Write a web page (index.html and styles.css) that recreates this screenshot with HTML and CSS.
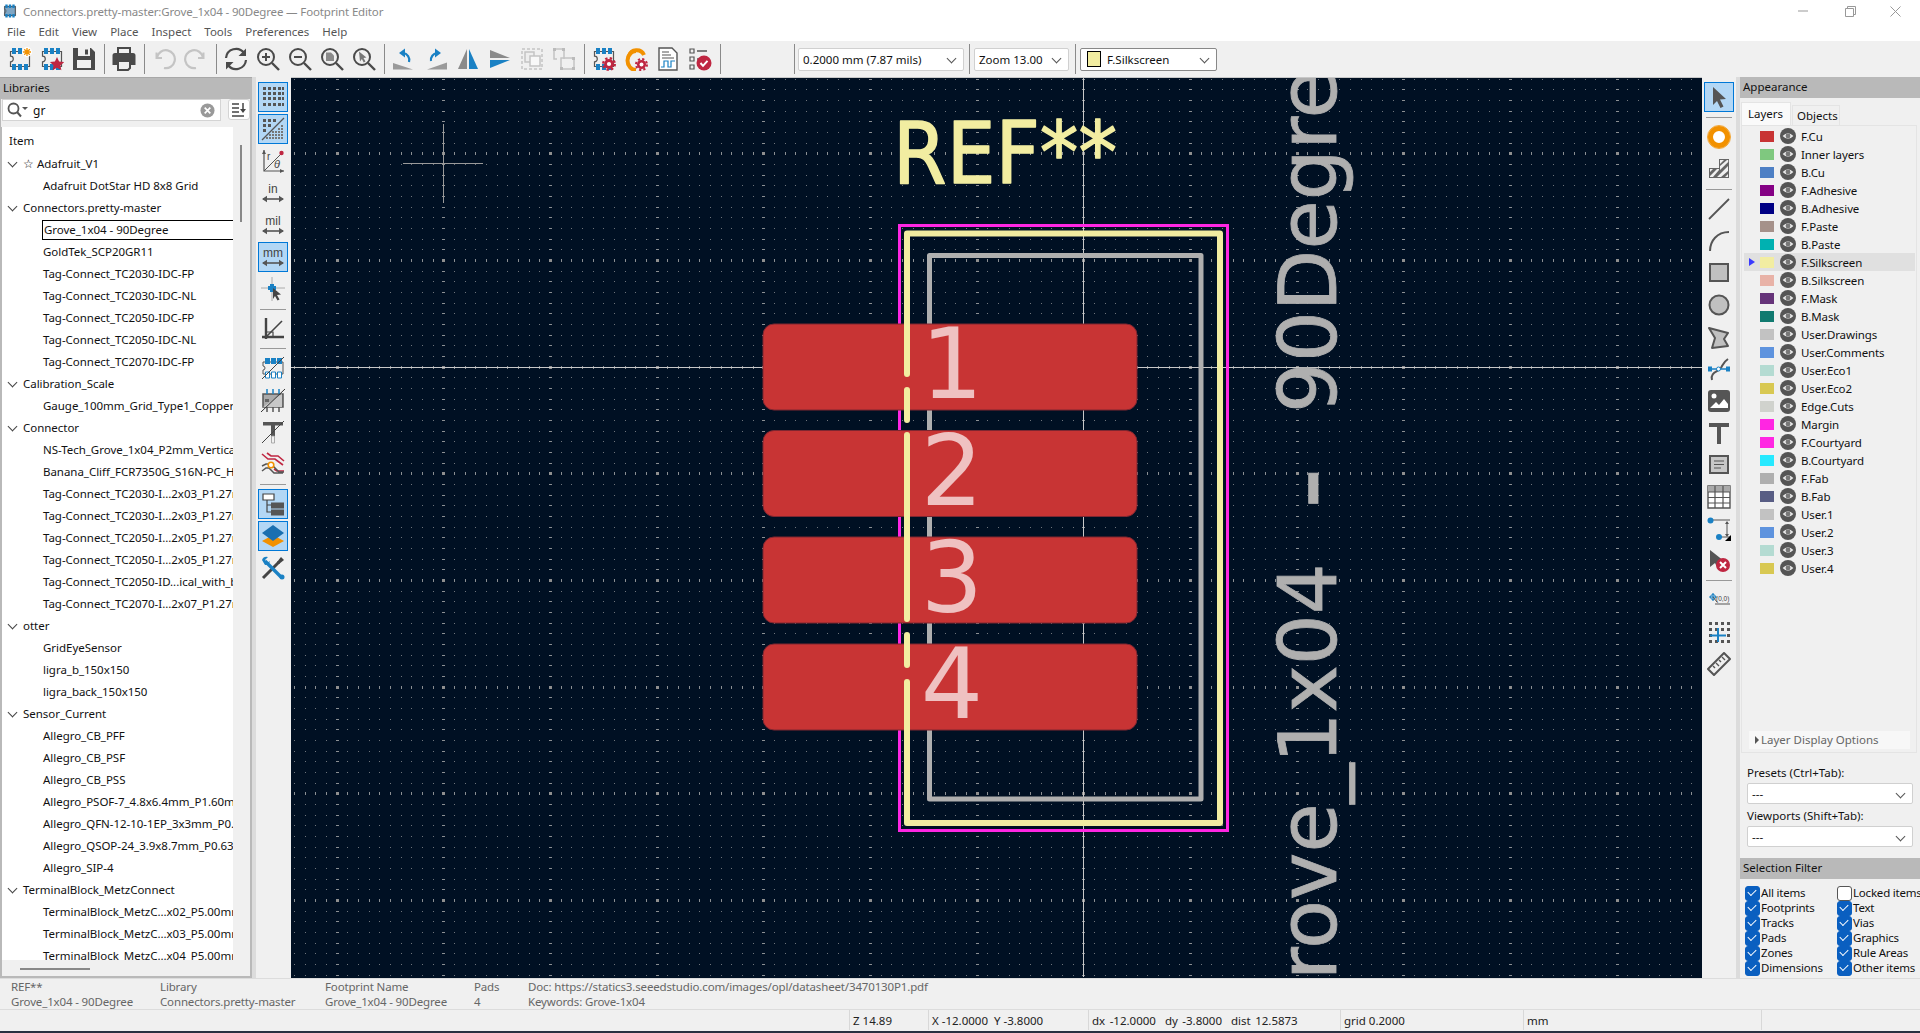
FILE: index.html
```html
<!DOCTYPE html>
<html lang="en">
<head>
<meta charset="utf-8">
<title>Footprint Editor</title>
<link rel="stylesheet" href="styles.css">
</head>
<body>
<svg class="sprite" width="0" height="0">
  <defs>
    <symbol id="chip" viewBox="0 0 24 24">
      <path d="M2.5 4.5h19v15h-19v-4.7a2.8 2.8 0 0 0 0-5.6z" fill="none" stroke="#555" stroke-width="1.2"/>
      <path d="M4 1h4v6H4zM10 1h4v6h-4zM16 1h4v6h-4zM4 17h4v6H4zM10 17h4v6h-4zM16 17h4v6h-4z" fill="#1a81c4"/>
    </symbol>
    <symbol id="gear" viewBox="0 0 12 12">
      <circle cx="6" cy="6" r="4.2" fill="#bf2641"/>
      <circle cx="6" cy="6" r="5" fill="none" stroke="#bf2641" stroke-width="2" stroke-dasharray="2 1.93"/>
      <circle cx="6" cy="6" r="1.8" fill="#fff"/>
    </symbol>
    <symbol id="eye" viewBox="0 0 16 16">
      <circle cx="8" cy="8" r="8" fill="#555"/>
      <path d="M2.6 8Q8 2.4 13.4 8Q8 13.6 2.6 8z" fill="#e8e8e8"/>
      <circle cx="8" cy="8" r="2.4" fill="#777"/>
    </symbol>
    <symbol id="arrows" viewBox="0 0 24 24">
      <path d="M2 12H22" stroke="#555" stroke-width="1.6" fill="none"/>
      <path d="M1 12l5-3.2v6.4zM23 12l-5-3.2v6.4z" fill="#555"/>
    </symbol>
    <pattern id="gMinor" width="32" height="32" patternUnits="userSpaceOnUse" x="0" y="4">
      <path d="M6 0h1v1H6zM17 0h1v1h-1zM27 0h1v1h-1zM6 11h1v1H6zM17 11h1v1h-1zM27 11h1v1h-1zM6 21h1v1H6zM17 21h1v1h-1zM27 21h1v1h-1z" fill="#6e747b"/>
    </pattern>
    <pattern id="gCols" width="320" height="32" patternUnits="userSpaceOnUse" x="0" y="4">
      <path d="M16 0h3v1h-3zM122 0h3v1h-3zM229 0h3v1h-3zM16 11h3v1h-3zM122 11h3v1h-3zM229 11h3v1h-3zM16 21h3v1h-3zM122 21h3v1h-3zM229 21h3v1h-3z" fill="#8b8f93"/>
    </pattern>
    <pattern id="gRows" width="32" height="320" patternUnits="userSpaceOnUse" x="0" y="0">
      <path d="M6 46h1v3H6zM17 46h1v3h-1zM27 46h1v3h-1zM6 152h1v3H6zM17 152h1v3h-1zM27 152h1v3h-1zM6 259h1v3H6zM17 259h1v3h-1zM27 259h1v3h-1z" fill="#8b8f93"/>
    </pattern>
    <pattern id="gMajor" width="320" height="320" patternUnits="userSpaceOnUse" x="0" y="0">
      <path d="M16 46h3v3h-3zM122 46h3v3h-3zM229 46h3v3h-3zM16 152h3v3h-3zM122 152h3v3h-3zM229 152h3v3h-3zM16 259h3v3h-3zM122 259h3v3h-3zM229 259h3v3h-3z" fill="#8f8f8f"/>
    </pattern>
  </defs>
</svg>

<div class="app">
  <header class="titlebar">
    <svg class="app-icon" viewBox="0 0 24 24"><rect x="3" y="4" width="18" height="16" fill="#7fa6c4" stroke="#345" stroke-width="1.5"/><use href="#chip" width="24" height="24"/></svg>
    <span class="title-text">Connectors.pretty-master:Grove_1x04 - 90Degree — Footprint Editor</span>
    <div class="win-controls">
      <svg viewBox="0 0 46 22"><path d="M18 11h10" stroke="#999" fill="none"/></svg>
      <svg viewBox="0 0 46 22"><path d="M19.5 8.5h8v8h-8zM21.5 8.5v-2h8v8h-2" stroke="#999" fill="none"/></svg>
      <svg viewBox="0 0 46 22"><path d="M18.500 6.500l10 10M28.500 6.500l-10 10" stroke="#999" fill="none"/></svg>
    </div>
  </header>
  <nav class="menubar">
    <span>File</span><span>Edit</span><span>View</span><span>Place</span><span>Inspect</span><span>Tools</span><span>Preferences</span><span>Help</span>
  </nav>

  <div class="toolbar">
    <button class="tb"><svg viewBox="0 0 24 24"><use href="#chip"/><circle cx="19" cy="5" r="5" fill="#fff"/><path d="M19 1v8M15 5h8M16.200 2.200l5.600 5.600M21.800 2.200l-5.600 5.600" stroke="#f29100" stroke-width="1.300"/></svg></button>
    <button class="tb"><svg viewBox="0 0 24 24"><use href="#chip"/><path d="M17 10l2.100 4.600 5 .5-3.700 3.300 1 4.900-4.400-2.500-4.400 2.500 1-4.900-3.700-3.300 5-.5z" fill="#bf2641"/></svg></button>
    <button class="tb"><svg viewBox="0 0 24 24"><path d="M1 1h18l4 4v18H1z" fill="#4a4a4a"/><path d="M6 1h12v8H6z" fill="#f0f0f0"/><path d="M13 2.500h3v5h-3z" fill="#4a4a4a"/><path d="M5 13h14v8H5z" fill="#f0f0f0"/></svg></button>
    <i class="tsep"></i>
    <button class="tb"><svg viewBox="0 0 24 24"><path d="M6 1h12v6H6z" fill="none" stroke="#4a4a4a" stroke-width="2"/><path d="M3 6h18a2.500 2.500 0 0 1 2.500 2.500V18H19v-4H5v4H.5V8.500A2.500 2.500 0 0 1 3 6z" fill="#4a4a4a"/><path d="M6 14h12v7l-2 2H6z" fill="none" stroke="#4a4a4a" stroke-width="2"/></svg></button>
    <i class="tsep"></i>
    <button class="tb"><svg viewBox="0 0 24 24"><path d="M4.500 5.500V11h5.500" fill="none" stroke="#c4c4c4" stroke-width="2"/><path d="M5 10.500A9 9 0 1 1 12 21" fill="none" stroke="#c4c4c4" stroke-width="2.200"/></svg></button>
    <button class="tb"><svg viewBox="0 0 24 24"><path d="M19.500 5.500V11H14" fill="none" stroke="#c4c4c4" stroke-width="2"/><path d="M19 10.500A9 9 0 1 0 12 21" fill="none" stroke="#c4c4c4" stroke-width="2.200"/></svg></button>
    <i class="tsep"></i>
    <button class="tb"><svg viewBox="0 0 24 24"><path d="M2 11A10 10 0 0 1 20 6M22 13A10 10 0 0 1 4 18" fill="none" stroke="#4a4a4a" stroke-width="2.200"/><path d="M22 1.500V9h-7.500zM2 22.500V15h7.500z" fill="#4a4a4a"/></svg></button>
    <button class="tb"><svg viewBox="0 0 24 24"><circle cx="10" cy="10" r="8" fill="none" stroke="#4a4a4a" stroke-width="2"/><path d="M16 16l7 7" stroke="#4a4a4a" stroke-width="2.400"/><path d="M6 10h8M10 6v8" stroke="#4a4a4a" stroke-width="2"/></svg></button>
    <button class="tb"><svg viewBox="0 0 24 24"><circle cx="10" cy="10" r="8" fill="none" stroke="#4a4a4a" stroke-width="2"/><path d="M16 16l7 7" stroke="#4a4a4a" stroke-width="2.400"/><path d="M6 10h8" stroke="#4a4a4a" stroke-width="2"/></svg></button>
    <button class="tb"><svg viewBox="0 0 24 24"><circle cx="10" cy="10" r="8" fill="none" stroke="#4a4a4a" stroke-width="2"/><path d="M16 16l7 7" stroke="#4a4a4a" stroke-width="2.400"/><path d="M6 5.500h5l3 3V14H6z" fill="#8a8a8a"/></svg></button>
    <button class="tb"><svg viewBox="0 0 24 24"><circle cx="10" cy="10" r="8" fill="none" stroke="#4a4a4a" stroke-width="2"/><path d="M16 16l7 7" stroke="#4a4a4a" stroke-width="2.400"/><path d="M7 4.500l7.500 6-3 .5 2 3.500-1.800 1-1.800-3.500L8 14.500z" fill="#777"/></svg></button>
    <i class="tsep"></i>
    <button class="tb"><svg viewBox="0 0 24 24"><path d="M1 22.500V16l20 6.500z" fill="#9a9a9a"/><path d="M17 15A7 7 0 0 0 11 6" fill="none" stroke="#1a81c4" stroke-width="2.200"/><path d="M13 1.500v9l-6-4.500z" fill="#1a81c4"/></svg></button>
    <button class="tb"><svg viewBox="0 0 24 24"><path d="M23 22.500H3l20-7z" fill="#9a9a9a"/><path d="M7 14A7 7 0 0 1 13 6" fill="none" stroke="#1a81c4" stroke-width="2.200"/><path d="M11 1.500v9l6-4.500z" fill="#1a81c4"/></svg></button>
    <button class="tb"><svg viewBox="0 0 24 24"><path d="M11 2v20H2z" fill="#8a8a8a"/><path d="M13 2v20h9z" fill="#1a81c4"/></svg></button>
    <button class="tb"><svg viewBox="0 0 24 24"><path d="M2 3l20 8H2z" fill="#8a8a8a"/><path d="M2 13h20L2 21z" fill="#1a81c4"/></svg></button>
    <button class="tb"><svg viewBox="0 0 24 24"><path d="M2 2h20v20H2z" fill="none" stroke="#c4c4c4" stroke-width="1.500" stroke-dasharray="3 2"/><path d="M5 5h9v10H5z" fill="#eee" stroke="#c4c4c4" stroke-width="1.500"/><path d="M10 9h10v10H10z" fill="#f8f8f8" stroke="#c4c4c4" stroke-width="1.500"/></svg></button>
    <button class="tb"><svg viewBox="0 0 24 24"><path d="M2 2h10v10M2 2v10h3M9 11h13v11H9z" fill="none" stroke="#c4c4c4" stroke-width="1.500"/><path d="M1 1h3v3H1zM10 1h3v3h-3zM20 10h3v3h-3zM20 20h3v3h-3zM8 20h3v3H8z" fill="#bbb"/></svg></button>
    <i class="tsep"></i>
    <button class="tb"><svg viewBox="0 0 24 24"><use href="#chip"/><use href="#gear" x="10" y="10" width="14" height="14"/></svg></button>
    <button class="tb"><svg viewBox="0 0 24 24"><path d="M12 4A8.500 9.500 0 1 0 12 23" fill="none" stroke="#f29100" stroke-width="4"/><path d="M5 9A8 8 0 0 1 20 8" fill="none" stroke="#f29100" stroke-width="4"/><use href="#gear" x="11" y="11" width="13" height="13"/></svg></button>
    <button class="tb"><svg viewBox="0 0 24 24"><path d="M3 1h13l5 5v17H3z" fill="#fff" stroke="#555" stroke-width="1.400"/><path d="M6 5h7M6 8h9M6 11h12" stroke="#555" stroke-width="1.200"/><path d="M5 20h3v-6h4v6h3v-6h4" fill="none" stroke="#1a81c4" stroke-width="1.200"/></svg></button>
    <button class="tb"><svg viewBox="0 0 24 24"><path d="M2 2h4v4H2zM2 10h4v4H2zM2 18h4v4H2z" fill="none" stroke="#555" stroke-width="1.200"/><path d="M9 4h10M9 12h2" stroke="#555" stroke-width="1.400"/><circle cx="16" cy="16" r="7.500" fill="#bf2641"/><path d="M12.500 16l2.500 2.800 4.500-5" fill="none" stroke="#fff" stroke-width="2"/></svg></button>
    <i class="tsep"></i>
    <i class="tsep tsep-far"></i>
    <div class="combo combo-grid">0.2000 mm (7.87 mils)</div>
    <i class="tsep tsep-g"></i>
    <div class="combo combo-zoom">Zoom 13.00</div>
    <i class="tsep tsep-z"></i>
    <div class="combo combo-layer"><i class="layer-chip"></i>F.Silkscreen</div>
  </div>

  <main class="main">
    <aside class="libs">
      <div class="pane-title">Libraries</div>
      <div class="searchrow">
        <div class="search">
          <svg class="search-ico" viewBox="0 0 22 16"><circle cx="6.500" cy="6.500" r="5" fill="none" stroke="#555" stroke-width="1.800"/><path d="M10 10l4 4.500" stroke="#555" stroke-width="2"/><path d="M15 5h6l-3 3z" fill="#555"/></svg>
          <span class="search-text">gr</span>
          <svg class="search-clear" viewBox="0 0 16 16"><circle cx="8" cy="8" r="7.500" fill="#999"/><path d="M5 5l6 6M11 5l-6 6" stroke="#fff" stroke-width="1.800"/></svg>
        </div>
        <button class="sortbtn"><svg viewBox="0 0 16 16"><path d="M1 2h7M1 6h7M1 10h7M1 14h12" stroke="#444" stroke-width="1.500"/><path d="M12 1v8" stroke="#444" stroke-width="1.500"/><path d="M9 7h6l-3 4z" fill="#444"/></svg></button>
      </div>
      <div class="treebox">
        <div class="treeinner">
          <div class="tree">
            <div class="tree-head">Item</div>
            <div class="row lib">☆ Adafruit_V1</div>
            <div class="row fp">Adafruit DotStar HD 8x8 Grid</div>
            <div class="row lib">Connectors.pretty-master</div>
            <div class="row fp sel">Grove_1x04 - 90Degree</div>
            <div class="row fp">GoldTek_SCP20GR11</div>
            <div class="row fp">Tag-Connect_TC2030-IDC-FP</div>
            <div class="row fp">Tag-Connect_TC2030-IDC-NL</div>
            <div class="row fp">Tag-Connect_TC2050-IDC-FP</div>
            <div class="row fp">Tag-Connect_TC2050-IDC-NL</div>
            <div class="row fp">Tag-Connect_TC2070-IDC-FP</div>
            <div class="row lib">Calibration_Scale</div>
            <div class="row fp">Gauge_100mm_Grid_Type1_CopperTop</div>
            <div class="row lib">Connector</div>
            <div class="row fp">NS-Tech_Grove_1x04_P2mm_Vertical</div>
            <div class="row fp">Banana_Cliff_FCR7350G_S16N-PC_H</div>
            <div class="row fp">Tag-Connect_TC2030-I...2x03_P1.27mm</div>
            <div class="row fp">Tag-Connect_TC2030-I...2x03_P1.27mm</div>
            <div class="row fp">Tag-Connect_TC2050-I...2x05_P1.27mm</div>
            <div class="row fp">Tag-Connect_TC2050-I...2x05_P1.27mm</div>
            <div class="row fp">Tag-Connect_TC2050-ID...ical_with_board</div>
            <div class="row fp">Tag-Connect_TC2070-I...2x07_P1.27mm</div>
            <div class="row lib">otter</div>
            <div class="row fp">GridEyeSensor</div>
            <div class="row fp">ligra_b_150x150</div>
            <div class="row fp">ligra_back_150x150</div>
            <div class="row lib">Sensor_Current</div>
            <div class="row fp">Allegro_CB_PFF</div>
            <div class="row fp">Allegro_CB_PSF</div>
            <div class="row fp">Allegro_CB_PSS</div>
            <div class="row fp">Allegro_PSOF-7_4.8x6.4mm_P1.60mm</div>
            <div class="row fp">Allegro_QFN-12-10-1EP_3x3mm_P0.5mm</div>
            <div class="row fp">Allegro_QSOP-24_3.9x8.7mm_P0.635mm</div>
            <div class="row fp">Allegro_SIP-4</div>
            <div class="row lib">TerminalBlock_MetzConnect</div>
            <div class="row fp">TerminalBlock_MetzC...x02_P5.00mm</div>
            <div class="row fp">TerminalBlock_MetzC...x03_P5.00mm</div>
            <div class="row fp">TerminalBlock_MetzC...x04_P5.00mm</div>
          </div>
          <div class="vscroll"><i></i></div>
        </div>
        <div class="hscroll"><i></i></div>
      </div>
    </aside>
    <div class="sash"></div>

    <div class="lefttools">
      <button class="vb on"><svg viewBox="0 0 24 24"><path d="M2 2h3v3H2zM7 2h3v3H7zM12 2h3v3h-3zM17 2h3v3h-3zM21 2h2v3h-2zM2 7h3v3H2zM7 7h3v3H7zM12 7h3v3h-3zM17 7h3v3h-3zM21 7h2v3h-2zM2 12h3v3H2zM7 12h3v3H7zM12 12h3v3h-3zM17 12h3v3h-3zM21 12h2v3h-2zM2 18h3v3H2zM7 18h3v3H7zM12 18h3v3h-3zM17 18h3v3h-3zM21 18h2v3h-2z" fill="#555"/></svg></button>
      <button class="vb on"><svg viewBox="0 0 24 24"><path d="M2 2h3v3H2zM7 2h3v3H7zM12 2h3v3h-3zM2 7h3v3H2zM7 7h3v3H7zM2 12h3v3H2z" fill="#555"/><path d="M11 14h2v2h-2zM14 14h2v2h-2zM17 14h2v2h-2zM20 14h2v2h-2zM8 17h2v2H8zM11 17h2v2h-2zM14 17h2v2h-2zM17 17h2v2h-2zM20 17h2v2h-2zM5 20h2v2H5zM8 20h2v2H8zM11 20h2v2h-2zM14 20h2v2h-2zM17 20h2v2h-2zM20 20h2v2h-2zM17 11h2v2h-2zM20 11h2v2h-2zM20 8h2v2h-2z" fill="#777"/><path d="M1 23L23 1" stroke="#555" stroke-width="1.200"/></svg></button>
      <button class="vb"><svg viewBox="0 0 24 24"><path d="M3 1v21h20" fill="none" stroke="#555" stroke-width="1.200"/><path d="M3 1l-2 4h4zM23 22l-4-2v4z" fill="#555"/><path d="M3 22L20 5" stroke="#555" stroke-width="1"/><circle cx="20.500" cy="4" r="2.200" fill="#bf2641"/><text class="ico-t" x="6" y="11" font-size="10">r</text><text class="ico-t ico-i" x="13" y="19" font-size="11">θ</text></svg></button>
      <button class="vb"><svg viewBox="0 0 24 24"><text class="ico-t" x="12" y="12" font-size="12" text-anchor="middle">in</text><use href="#arrows" y="6" width="24" height="24"/></svg></button>
      <button class="vb"><svg viewBox="0 0 24 24"><text class="ico-t" x="12" y="12" font-size="12" text-anchor="middle">mil</text><use href="#arrows" y="6" width="24" height="24"/></svg></button>
      <button class="vb on"><svg viewBox="0 0 24 24"><text class="ico-t" x="12" y="12" font-size="12" text-anchor="middle">mm</text><use href="#arrows" y="6" width="24" height="24"/></svg></button>
      <button class="vb"><svg viewBox="0 0 24 24"><path d="M0 11h24M11 0v24" stroke="#999" stroke-width=".8"/><path d="M7 9h8v4H7z" fill="#1a81c4"/><path d="M9 7h4v8H9z" fill="#1a81c4"/><path d="M12 11l8 6.500-4 .5 2.500 4.500-2 1-2.500-4.500-2 3z" fill="#444"/></svg></button>
      <i class="vsep vsep8"></i>
      <button class="vb"><svg viewBox="0 0 24 24"><path d="M5 1v21M1 20h22" fill="none" stroke="#444" stroke-width="2.400"/><path d="M5 15h7v5" fill="none" stroke="#444" stroke-width="1.200"/><path d="M4 21L21 4" stroke="#444" stroke-width="1.600"/></svg></button>
      <i class="vsep"></i>
      <button class="vb"><svg viewBox="0 0 24 24"><path d="M2 6h20v12H2v-4a2 2 0 0 0 0-4z" fill="none" stroke="#555" stroke-width="1"/><path d="M4 2h5v6H4zM10 2h5v6h-5zM16 2h5v6h-5z" fill="#1a81c4"/><path d="M4.500 16h4v6h-4zM10.500 16h4v6h-4zM16.500 16h4v6h-4z" fill="#fff" stroke="#1a81c4" stroke-width="1"/><path d="M1 23L23 1" stroke="#444" stroke-width="1"/></svg></button>
      <button class="vb"><svg viewBox="0 0 24 24"><path d="M2 6h20v13H2z" fill="#aaa" stroke="#555" stroke-width="1.500"/><path d="M2 19L21 6V19z" fill="#c8c8c8"/><path d="M6 1v5M12 1v5M18 1v5" stroke="#1a81c4" stroke-width="1.500"/><path d="M6 19v5M12 19v5M18 19v5" stroke="#555" stroke-width="1.500"/><path d="M4 11h4v3H4z" fill="#666"/><path d="M0 24L24 1" stroke="#333" stroke-width="1"/></svg></button>
      <button class="vb"><svg viewBox="0 0 24 24"><path d="M2 2h20v3.500h-8V16h-4V5.500H2z" fill="#555"/><path d="M10.500 16h3v7h-3z" fill="none" stroke="#999" stroke-width=".8"/><path d="M1 23L23 1" stroke="#444" stroke-width="1"/></svg></button>
      <button class="vb"><svg viewBox="0 0 24 24"><path d="M1 2l6 5h7l8 6" fill="none" stroke="#bf2641" stroke-width="1.600"/><path d="M6 1l4 3h7l6 5M13 17l3 2h7" fill="none" stroke="#bf2641" stroke-width="1.600"/><path d="M1 14l4-2h5l8 8h5M1 19l4-3h3l5 5h9" fill="none" stroke="#555" stroke-width="1.500"/><circle cx="10" cy="13" r="2.800" fill="#fff" stroke="#f29100" stroke-width="1.600"/></svg></button>
      <i class="vsep vsep8"></i>
      <button class="vb on"><svg viewBox="0 0 24 24"><path d="M2 2h11v6H2z" fill="#fff" stroke="#444" stroke-width="1.200"/><path d="M6 8v12h4M6 13h4" fill="none" stroke="#444" stroke-width="1.200"/><path d="M10 10.500h13v6H10zM10 17.500h13v6H10z" fill="#555"/></svg></button>
      <button class="vb on"><svg viewBox="0 0 24 24"><path d="M12 11l11 6-11 6-11-6z" fill="#f29100"/><path d="M12 1l11 8-11 8-11-8z" fill="#1a6fb0"/></svg></button>
      <button class="vb"><svg viewBox="0 0 24 24"><path d="M2 22L18 6" stroke="#444" stroke-width="3"/><path d="M16 6l4-5 3 3-5 4z" fill="#444"/><path d="M4 5l16 16" stroke="#1a81c4" stroke-width="3.400"/><path d="M1 4a5 5 0 0 1 6-3L4 4l2 3 3-2a5 5 0 0 1-5 4z" fill="#1a81c4"/><circle cx="21" cy="21" r="2.500" fill="#1a81c4"/></svg></button>
    </div>

    <section class="canvas">
      <svg class="board" viewBox="291 78 1411 899" preserveAspectRatio="xMinYMin slice">
        <rect class="bg" x="291" y="78" width="1411" height="899"/>
        <rect x="291" y="78" width="1411" height="899" fill="url(#gMinor)"/>
        <rect x="291" y="78" width="1411" height="899" fill="url(#gCols)"/>
        <rect x="291" y="78" width="1411" height="899" fill="url(#gRows)"/>
        <rect x="291" y="78" width="1411" height="899" fill="url(#gMajor)"/>
        <path class="cross" d="M291 367.500H1702M1083.500 78V977"/>
        <path class="cross2" d="M403 163.500H483M443.500 124V203"/>
        <rect class="margin" x="899.500" y="225.500" width="328" height="605"/>
        <rect class="fab" x="929.500" y="255.500" width="271.500" height="543.500"/>
        <text class="fabtext" transform="translate(1336 20) rotate(-90)" text-anchor="end">Grove_1x04 <tspan class="fabdash" dy="9">-</tspan><tspan dy="-9"> 90Degree</tspan></text>
        <rect class="pad" x="763" y="324" width="374" height="86" rx="11"/>
        <rect class="pad" x="763" y="430.500" width="374" height="86" rx="11"/>
        <rect class="pad" x="763" y="537" width="374" height="86" rx="11"/>
        <rect class="pad" x="763" y="644" width="374" height="86" rx="11"/>
        <text class="padnum" x="952" y="398">1</text>
        <text class="padnum" x="952" y="505">2</text>
        <text class="padnum" x="952" y="612">3</text>
        <text class="padnum" x="952" y="718">4</text>
        <path class="silk" d="M907 374V233.500H1220V823H907V682M907 390V420M907 435V619M907 635V665"/>
        <text class="reftext" x="893" y="183" textLength="224" lengthAdjust="spacingAndGlyphs">REF**</text>
      </svg>
    </section>

    <div class="righttools">
      <button class="vb on"><svg viewBox="0 0 24 24"><path d="M6 2l13 12-6 .5 3.500 7-3 1.500-3.500-7-4 4z" fill="#555"/></svg></button>
      <i class="vsep rsep1"></i>
      <button class="vb"><svg viewBox="0 0 24 24"><circle cx="12" cy="12" r="8.500" fill="#fff" stroke="#f29100" stroke-width="5"/><circle cx="12" cy="12" r="11.500" fill="none" stroke="#f29100" stroke-width=".8"/></svg></button>
      <button class="vb"><svg viewBox="0 0 24 24"><path d="M12 2h10v19H2V11h10z" fill="#666"/><path d="M13 3h4l-4 4zM20 3h1.200v2L13 13V9zM21 9v5l-7 6h-4zM21 17v3h-3zM3 12h3l-3 3zM10 12h2v1l-6 7H3v-1z" fill="#f0f0f0"/></svg></button>
      <i class="vsep rsep2"></i>
      <button class="vb"><svg viewBox="0 0 24 24"><path d="M2 22L22 2" stroke="#555" stroke-width="1.800"/></svg></button>
      <button class="vb"><svg viewBox="0 0 24 24"><path d="M3 22C3 12 10 3 22 3" fill="none" stroke="#555" stroke-width="2"/></svg></button>
      <button class="vb"><svg viewBox="0 0 24 24"><rect x="3" y="3" width="18" height="17" fill="#c0c0c0" stroke="#555" stroke-width="2"/></svg></button>
      <button class="vb"><svg viewBox="0 0 24 24"><circle cx="12" cy="12" r="9.500" fill="#c0c0c0" stroke="#555" stroke-width="2"/></svg></button>
      <button class="vb"><svg viewBox="0 0 24 24"><path d="M2 3l19 5-4 6 4 7-16 2 3-10z" fill="#c0c0c0" stroke="#555" stroke-width="2" stroke-linejoin="round"/></svg></button>
      <button class="vb"><svg viewBox="0 0 24 24"><path d="M5 23c-2-7 5-8 8-11s2-6 8-10" fill="none" stroke="#555" stroke-width="2"/><path d="M1 12h22" stroke="#1a81c4" stroke-width="1.500"/><path d="M1 9.500h4v5H1zM19 9.500h4v5h-4z" fill="#1a81c4"/><circle cx="11.500" cy="12" r="2" fill="#fff" stroke="#1a81c4"/></svg></button>
      <button class="vb"><svg viewBox="0 0 24 24"><rect x="1" y="1" width="22" height="22" rx="3" fill="#555"/><circle cx="7" cy="7" r="2.500" fill="#fff"/><path d="M3 19l6-6 3 3 5-6 4 5v4z" fill="#fff"/></svg></button>
      <button class="vb"><svg viewBox="0 0 24 24"><path d="M2 2h20v4h-8v17h-4V6H2z" fill="#555"/></svg></button>
      <button class="vb"><svg viewBox="0 0 24 24"><rect x="3" y="3" width="18" height="17" fill="#c8c8c8" stroke="#555" stroke-width="2"/><path d="M7 8h10M7 11.500h10M7 15h7" stroke="#555" stroke-width="1.200"/></svg></button>
      <button class="vb"><svg viewBox="0 0 24 24"><path d="M1 1h22v22H1z" fill="#fff" stroke="#555" stroke-width="1.400"/><path d="M1 1h22v6H1z" fill="#aaa"/><path d="M1 7h22M1 12.500h22M1 18h22M8 1v22M16 1v22" stroke="#555" stroke-width="1.200"/></svg></button>
      <button class="vb"><svg class="overflow" viewBox="0 0 24 24"><path d="M3 3h20M11 20h12M20 5v14" stroke="#555" stroke-width="1" fill="none"/><path d="M20 4l-2 3h4zM20 20l-2-3h4z" fill="#555"/><circle cx="3.500" cy="3.500" r="3" fill="#1a81c4"/><circle cx="12" cy="20" r="3" fill="#1a81c4"/><path d="M24 18v6h-6z" fill="#000"/></svg></button>
      <button class="vb"><svg viewBox="0 0 24 24"><path d="M3 1l14 11-6 .5 3 6-3 1.500-3-6-5 4z" fill="#555"/><circle cx="16" cy="16" r="7" fill="#bf2641"/><path d="M13 13l6 6M19 13l-6 6" stroke="#fff" stroke-width="2"/></svg></button>
      <i class="vsep rsep3"></i>
      <button class="vb"><svg viewBox="0 0 24 24"><path d="M2 9h8M6 5v8" stroke="#1a81c4" stroke-width="1.200"/><circle cx="6" cy="9" r="2.500" fill="none" stroke="#1a81c4"/><path d="M6 9l4 5" stroke="#555"/><text class="ico-t" x="9" y="13" font-size="6.500">(0,0)</text><path d="M8 16h15" stroke="#555"/></svg></button>
      <button class="vb"><svg viewBox="0 0 24 24"><path d="M2 2h3v3H2zM8 2h3v3H8zM14 2h3v3h-3zM20 2h3v3h-3zM2 8h3v3H2zM8 8h3v3H8zM14 8h3v3h-3zM20 8h3v3h-3zM2 14h3v3H2zM20 14h3v3h-3zM2 20h3v3H2zM8 20h3v3H8zM14 20h3v3h-3zM20 20h3v3h-3z" fill="#555"/><path d="M3 15.500h16M11 8v14" stroke="#1a81c4" stroke-width="2"/></svg></button>
      <button class="vb"><svg viewBox="0 0 24 24"><path d="M1 17L17 1l6 6L7 23z" fill="#f0f0f0" stroke="#555" stroke-width="2" stroke-linejoin="round"/><path d="M6 14l2 2M9 11l3 3M12 8l2 2M15 5l3 3" stroke="#555" stroke-width="1.400"/></svg></button>
    </div>
    <div class="sash"></div>

    <aside class="appearance">
      <div class="pane-title">Appearance</div>
      <div class="tabs"><span class="tab">Objects</span><span class="tab active">Layers</span></div>
      <div class="layerbox">
        <div class="layers">
          <div class="layer"><i class="swatch" style="background:#c83434"></i><svg class="eye"><use href="#eye"/></svg>F.Cu</div>
          <div class="layer"><i class="swatch" style="background:#7fc87f"></i><svg class="eye"><use href="#eye"/></svg>Inner layers</div>
          <div class="layer"><i class="swatch" style="background:#4d7fc4"></i><svg class="eye"><use href="#eye"/></svg>B.Cu</div>
          <div class="layer"><i class="swatch" style="background:#840084"></i><svg class="eye"><use href="#eye"/></svg>F.Adhesive</div>
          <div class="layer"><i class="swatch" style="background:#000084"></i><svg class="eye"><use href="#eye"/></svg>B.Adhesive</div>
          <div class="layer"><i class="swatch" style="background:#a5918a"></i><svg class="eye"><use href="#eye"/></svg>F.Paste</div>
          <div class="layer"><i class="swatch" style="background:#00b1b1"></i><svg class="eye"><use href="#eye"/></svg>B.Paste</div>
          <div class="layer current"><i class="swatch" style="background:#f2eda1"></i><svg class="eye"><use href="#eye"/></svg>F.Silkscreen</div>
          <div class="layer"><i class="swatch" style="background:#e8b2a7"></i><svg class="eye"><use href="#eye"/></svg>B.Silkscreen</div>
          <div class="layer"><i class="swatch" style="background:#653379"></i><svg class="eye"><use href="#eye"/></svg>F.Mask</div>
          <div class="layer"><i class="swatch" style="background:#117a70"></i><svg class="eye"><use href="#eye"/></svg>B.Mask</div>
          <div class="layer"><i class="swatch" style="background:#c2c2c2"></i><svg class="eye"><use href="#eye"/></svg>User.Drawings</div>
          <div class="layer"><i class="swatch" style="background:#5e93de"></i><svg class="eye"><use href="#eye"/></svg>User.Comments</div>
          <div class="layer"><i class="swatch" style="background:#b4dbd2"></i><svg class="eye"><use href="#eye"/></svg>User.Eco1</div>
          <div class="layer"><i class="swatch" style="background:#d8c852"></i><svg class="eye"><use href="#eye"/></svg>User.Eco2</div>
          <div class="layer"><i class="swatch" style="background:#d0d2cd"></i><svg class="eye"><use href="#eye"/></svg>Edge.Cuts</div>
          <div class="layer"><i class="swatch" style="background:#ff26e2"></i><svg class="eye"><use href="#eye"/></svg>Margin</div>
          <div class="layer"><i class="swatch" style="background:#ff26e2"></i><svg class="eye"><use href="#eye"/></svg>F.Courtyard</div>
          <div class="layer"><i class="swatch" style="background:#26e9ff"></i><svg class="eye"><use href="#eye"/></svg>B.Courtyard</div>
          <div class="layer"><i class="swatch" style="background:#afafaf"></i><svg class="eye"><use href="#eye"/></svg>F.Fab</div>
          <div class="layer"><i class="swatch" style="background:#585d84"></i><svg class="eye"><use href="#eye"/></svg>B.Fab</div>
          <div class="layer"><i class="swatch" style="background:#c2c2c2"></i><svg class="eye"><use href="#eye"/></svg>User.1</div>
          <div class="layer"><i class="swatch" style="background:#5e93de"></i><svg class="eye"><use href="#eye"/></svg>User.2</div>
          <div class="layer"><i class="swatch" style="background:#b4dbd2"></i><svg class="eye"><use href="#eye"/></svg>User.3</div>
          <div class="layer"><i class="swatch" style="background:#d8c852"></i><svg class="eye"><use href="#eye"/></svg>User.4</div>
        </div>
        <div class="ldo">Layer Display Options</div>
      </div>
      <div class="presets">
        <label>Presets (Ctrl+Tab):</label>
        <div class="combo combo-wide">---</div>
        <label>Viewports (Shift+Tab):</label>
        <div class="combo combo-wide">---</div>
      </div>
      <div class="pane-title">Selection Filter</div>
      <div class="filters">
        <span class="chk on">All items</span><span class="chk">Locked items</span>
        <span class="chk on">Footprints</span><span class="chk on">Text</span>
        <span class="chk on">Tracks</span><span class="chk on">Vias</span>
        <span class="chk on">Pads</span><span class="chk on">Graphics</span>
        <span class="chk on">Zones</span><span class="chk on">Rule Areas</span>
        <span class="chk on">Dimensions</span><span class="chk on">Other items</span>
      </div>
    </aside>
  </main>

  <div class="msgpanel">
    <div class="msg m1"><span>REF**</span><span>Grove_1x04 - 90Degree</span></div>
    <div class="msg m2"><span>Library</span><span>Connectors.pretty-master</span></div>
    <div class="msg m3"><span>Footprint Name</span><span>Grove_1x04 - 90Degree</span></div>
    <div class="msg m4"><span>Pads</span><span>4</span></div>
    <div class="msg m5"><span>Doc: https://statics3.seeedstudio.com/images/opl/datasheet/3470130P1.pdf</span><span>Keywords: Grove-1x04</span></div>
  </div>
  <footer class="statusbar">
    <span class="st s0"></span>
    <span class="st s1">Z 14.89</span>
    <span class="st s2">X -12.0000  Y -3.8000</span>
    <span class="st s3">dx -12.0000  dy -3.8000  dist 12.5873</span>
    <span class="st s4">grid 0.2000</span>
    <span class="st s5">mm</span>
    <span class="st s6"></span>
  </footer>
</div>
</body>
</html>
```

FILE: styles.css
```css
* { box-sizing: border-box; }
html, body { margin: 0; height: 100%; overflow: hidden; }
body { font-family: "Noto Sans", "Liberation Sans", sans-serif; font-size: 11.5px; color: #111; background: #f0f0f0; }
.sprite { position: absolute; }
i { display: block; font-style: normal; }
button { margin: 0; padding: 0; border: 0; background: none; font: inherit; }
.app { display: flex; flex-direction: column; width: 1920px; height: 1033px; }

.titlebar { display: flex; align-items: center; height: 22px; background: #fff; padding-left: 3px; color: #888; font-size: 11.5px; letter-spacing: -0.15px; }
.app-icon { width: 14px; height: 14px; margin-right: 6px; }
.title-text { flex: 1; }
.win-controls { display: flex; margin-right: 2px; }
.win-controls svg { width: 46px; height: 22px; }

.menubar { display: flex; height: 19px; align-items: center; background: #fff; color: #555; padding-left: 7px; gap: 13px; font-size: 11.5px; }

.toolbar { display: flex; align-items: center; height: 36px; background: #f0f0f0; padding-left: 4px; flex: none; }
.tb { width: 32px; height: 32px; display: flex; align-items: center; justify-content: center; flex: none; }
.tb svg { width: 24px; height: 24px; display: block; }
.tsep { width: 8px; height: 30px; flex: none; background: linear-gradient(#8a8a8a, #8a8a8a) center / 1px 100% no-repeat; }
.tsep-far { margin-left: 66px; }
.tsep-g { margin: 0 1px; }
.tsep-z { margin-left: 2px; }

.combo { position: relative; display: flex; align-items: center; height: 23px; background: #fff; border: 1px solid #d0d0d0; border-radius: 2px; padding-left: 4px; font-size: 11.5px; flex: none; }
.combo::after { content: ""; position: absolute; right: 8px; top: 6px; width: 6px; height: 6px; border-right: 1px solid #555; border-bottom: 1px solid #555; transform: rotate(45deg); }
.combo-grid { width: 166px; }
.combo-zoom { width: 95px; }
.combo-layer { width: 137px; margin-left: 1px; border-color: #888; padding-left: 6px; }
.layer-chip { width: 14px; height: 16px; background: #f2eda1; border: 1px solid #000; margin-right: 6px; }
.combo-wide { width: 166px; height: 21px; padding-left: 4px; }

.main { display: flex; height: 901px; flex: none; }

.libs { width: 252px; display: flex; flex-direction: column; flex: none; background: #f0f0f0; }
.pane-title { height: 21px; background: #b9b9b9; padding-left: 3px; line-height: 20px; flex: none; font-size: 11.5px; }
.libs .pane-title { height: 22px; border-top: 1px solid #a8a8a8; }
.searchrow { display: flex; height: 28px; padding: 0 0 6px 1px; border-left: 1px solid #b9b9b9; border-right: 2px solid #b9b9b9; flex: none; }
.search { display: flex; align-items: center; width: 219px; height: 22px; background: #fff; border: 1px solid #d4d4d4; padding-left: 4px; }
.search-ico { width: 22px; height: 16px; flex: none; }
.search-text { flex: 1; padding-left: 4px; font-size: 12px; }
.search-clear { width: 15px; height: 15px; margin-right: 5px; }
.sortbtn { width: 22px; height: 21px; margin-left: 7px; background: #fff; border: 1px solid #d4d4d4; border-radius: 3px; padding: 2px; }
.sortbtn svg { width: 16px; height: 16px; display: block; }

.treebox { flex: 1; min-height: 0; display: flex; flex-direction: column; background: #fff; border: 2px solid #b9b9b9; border-top: 0; }
.treeinner { flex: 1; min-height: 0; display: flex; }
.tree { width: 231px; padding-top: 1px; overflow: hidden; flex: none; background: #fff; }
.tree-head { height: 25px; line-height: 25px; padding-left: 7px; }
.row { position: relative; height: 22px; line-height: 22px; white-space: nowrap; overflow: hidden; letter-spacing: -0.03px; }
.row.lib { padding-left: 21px; }
.row.lib::before { content: ""; position: absolute; left: 7px; top: 6px; width: 6px; height: 6px; border-right: 1.500px solid #444; border-bottom: 1.500px solid #444; transform: rotate(45deg); }
.row.fp { padding-left: 41px; }
.row.sel { height: 20px; line-height: 18px; margin: 1px 0; margin-left: 40px; padding-left: 1px; border: 1px solid #000; border-right: 0; }
.vscroll { flex: 1; background: #f0f0f0; padding-top: 18px; }
.vscroll i { width: 2px; height: 77px; background: #888; margin-left: 7px; }
.hscroll { height: 16px; background: #f0f0f0; padding: 8px 0 0 18px; flex: none; }
.hscroll i { width: 70px; height: 2px; background: #888; }

.sash { width: 4px; background: #dcdcdc; flex: none; }
.lefttools { width: 35px; display: flex; flex-direction: column; align-items: center; padding: 4px 1px 0 0; flex: none; background: #f0f0f0; }
.righttools { width: 34px; display: flex; flex-direction: column; align-items: center; padding: 4px 0 0 0; flex: none; background: #f0f0f0; }
.vb { position: relative; width: 30px; height: 30px; margin: 1px 0; display: flex; align-items: center; justify-content: center; border: 1px solid transparent; flex: none; }
.vb.on { background: #b3d7f5; border-color: #0078d7; }
.vb svg { width: 24px; height: 24px; display: block; }
.vsep { width: 26px; height: 7px; flex: none; background: linear-gradient(#999, #999) center / 100% 1px no-repeat; }
.vsep8 { height: 8px; }
.rsep1 { height: 7px; margin-top: 1px; }
.rsep2 { height: 8px; }
.rsep3 { height: 7px; }
.ico-t { font-family: "Liberation Sans", sans-serif; fill: #444; }
.ico-i { font-style: italic; }
.overflow { overflow: visible; }

.canvas { flex: none; width: 1411px; background: #001023; border-top: 1px solid #c8c8c8; overflow: hidden; }
.board { display: block; width: 1411px; height: 899px; }
.bg { fill: #001023; }
.cross { stroke: #c8c8c8; stroke-width: 1; fill: none; }
.cross2 { stroke: #9a9a9a; stroke-width: 1; fill: none; }
.margin { fill: none; stroke: #ff26e2; stroke-width: 3; }
.fab { fill: none; stroke: #afafaf; stroke-width: 5; stroke-linejoin: round; }
.fabtext { font-family: "DejaVu Sans", sans-serif; font-size: 80px; fill: #afafaf; stroke: #afafaf; stroke-width: 0.8px; word-spacing: 29px; }
.fabdash { font-size: 115px; }
.pad { fill: #c83434; stroke: #7e2630; stroke-width: 1; }
.padnum { font-family: "DejaVu Sans", sans-serif; font-size: 98px; fill: #efc1c1; text-anchor: middle; }
.silk { fill: none; stroke: #f2eda1; stroke-width: 6; stroke-linecap: round; stroke-linejoin: round; }
.reftext { font-family: "DejaVu Sans", sans-serif; font-size: 86px; fill: #f2eda1; stroke: #f2eda1; stroke-width: 1.500px; stroke-linejoin: round; }

.appearance { flex: 1; min-width: 0; display: flex; flex-direction: column; background: #f0f0f0; }
.tabs { display: flex; flex-direction: row-reverse; justify-content: flex-end; align-items: flex-end; height: 27px; padding-left: 1px; flex: none; }
.tab { display: block; width: 48px; height: 20px; line-height: 20px; padding-left: 4px; border: 1px solid #e4e4e4; border-bottom: 0; margin-left: 1px; }
.tab.active { width: 50px; height: 23px; line-height: 21px; padding-left: 6px; background: #fafafa; margin-left: 0; }
.layerbox { height: 628px; margin: 0 3px 0 1px; border: 1px solid #e4e4e4; padding: 0 1px 0 2px; flex: none; }
.layers { height: 600px; padding-top: 1px; background: #f0f0f0; }
.layer { position: relative; display: flex; align-items: center; height: 18px; padding-left: 16px; letter-spacing: -0.1px; }
.layer.current { background: #e0e0e0; }
.layer.current::before { content: ""; position: absolute; left: 5px; top: 5px; border-left: 6px solid #3a3aff; border-top: 4px solid transparent; border-bottom: 4px solid transparent; }
.swatch { width: 14px; height: 11px; margin-right: 6px; flex: none; }
.eye { width: 16px; height: 16px; margin-right: 5px; flex: none; }
.ldo { position: relative; height: 18px; line-height: 18px; margin: 5px 5px 0 5px; padding-left: 12px; background: #f7f7f7; color: #666; }
.ldo::before { content: ""; position: absolute; left: 6px; top: 5px; border-left: 4px solid #555; border-top: 4px solid transparent; border-bottom: 4px solid transparent; }
.presets { display: flex; flex-direction: column; height: 105px; padding: 12px 0 0 7px; flex: none; }
.presets label { display: block; height: 16px; line-height: 16px; margin-bottom: 2px; }
.presets .combo-wide + label { margin-top: 4px; }
.filters { display: grid; grid-template-columns: 92px 1fr; grid-auto-rows: 15px; padding: 6px 0 0 5px; white-space: nowrap; letter-spacing: -0.2px; }
.chk { position: relative; display: block; line-height: 15px; padding-left: 16px; }
.chk::before { content: ""; position: absolute; left: 0; top: 1px; width: 13px; height: 13px; border-radius: 3px; background: #fff; border: 1px solid #555; }
.chk.on::before { background: #0a5fc0; border-color: #0a5fc0; }
.chk.on::after { content: ""; position: absolute; left: 3px; top: 4px; width: 7px; height: 4px; border-left: 1.500px solid #fff; border-bottom: 1.500px solid #fff; transform: rotate(-45deg); }

.msgpanel { display: flex; height: 31px; padding: 0 0 0 11px; color: #666; border-top: 1px solid #dcdcdc; flex: none; letter-spacing: -0.15px; }
.msg { display: flex; flex-direction: column; line-height: 15px; white-space: nowrap; flex: none; }
.m1 { width: 149px; }
.m2 { width: 165px; }
.m3 { width: 149px; }
.m4 { width: 54px; }

.statusbar { display: flex; flex: 1; min-height: 0; border-top: 1px solid #dcdcdc; border-bottom: 2px solid #2a3040; background: #f0f0f0; color: #222; line-height: 21px; }
.st { display: block; height: 20px; padding-left: 3px; border-left: 1px solid #d8d8d8; white-space: pre; flex: none; }
.s0 { width: 849px; border-left: 0; }
.s1 { width: 79px; }
.s2 { width: 160px; }
.s3 { width: 252px; word-spacing: 1.500px; }
.s4 { width: 183px; }
.s5 { width: 238px; }
.s6 { flex: 1; }
```
